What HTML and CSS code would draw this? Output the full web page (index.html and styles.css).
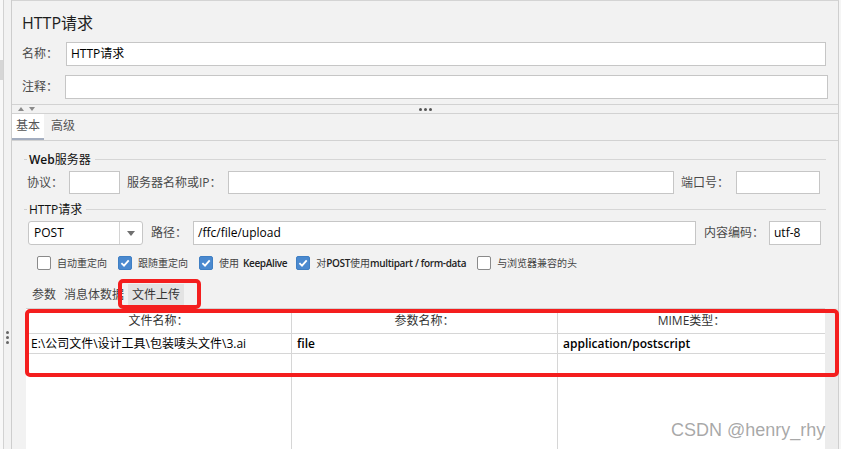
FILE: index.html
```html
<!DOCTYPE html>
<html lang="zh-CN">
<head>
<meta charset="utf-8">
<title>HTTP请求</title>
<link rel="stylesheet" href="styles.css">
</head>
<body>
<div class="app">
  <aside class="lstrip">
    <div class="edge"><div class="edge-mark"></div></div>
    <div class="grip"><i></i><i></i><i></i></div>
  </aside>
  <main class="main">
    <div class="title">HTTP请求</div>
    <div class="field name-row"><span class="lbl">名称：</span><div class="input">HTTP请求</div></div>
    <div class="field comment-row"><span class="lbl">注释：</span><div class="input"></div></div>
    <div class="splitter">
      <div class="arrows"><i class="up"></i><i class="down"></i></div>
      <div class="dots"><i></i><i></i><i></i></div>
      <div></div>
    </div>
    <div class="tabs"><div class="tab active">基本</div><div class="tab">高级</div></div>
    <section class="panel">
      <div class="group-title"><span class="dash"></span><span class="gt-text"><b>Web</b>服务器</span><span class="rule"></span></div>
      <div class="row row-server">
        <span class="lbl">协议：</span><div class="input w-proto"></div>
        <span class="lbl l-host">服务器名称或IP：</span><div class="input grow i-host"></div>
        <span class="lbl l-port">端口号：</span><div class="input w-port"></div>
      </div>
      <div class="group-title g2"><span class="dash"></span><span class="gt-text">HTTP请求</span><span class="rule"></span></div>
      <div class="row row-http">
        <div class="select"><span class="sel-val">POST</span><span class="sel-btn"><i></i></span></div>
        <span class="lbl l-path">路径：</span><div class="input grow i-path">/ffc/file/upload</div>
        <span class="lbl l-enc">内容编码：</span><div class="input w-enc">utf-8</div>
      </div>
      <div class="checks">
        <div class="cb"><span class="box"></span>自动重定向</div>
        <div class="cb"><span class="box on"><svg width="10" height="10" viewBox="0 0 10 10"><path d="M1.4 5.2 L4 7.7 L8.7 2.3" fill="none" stroke="#fff" stroke-width="1.8"/></svg></span>跟随重定向</div>
        <div class="cb"><span class="box on"><svg width="10" height="10" viewBox="0 0 10 10"><path d="M1.4 5.2 L4 7.7 L8.7 2.3" fill="none" stroke="#fff" stroke-width="1.8"/></svg></span>使用<b class="sp">KeepAlive</b></div>
        <div class="cb"><span class="box on"><svg width="10" height="10" viewBox="0 0 10 10"><path d="M1.4 5.2 L4 7.7 L8.7 2.3" fill="none" stroke="#fff" stroke-width="1.8"/></svg></span>对<b>POST</b>使用<b>multipart / form-data</b></div>
        <div class="cb"><span class="box"></span>与浏览器兼容的头</div>
      </div>
      <div class="subtabs">
        <div class="stab">参数</div>
        <div class="stab">消息体数据</div>
        <div class="stab active">文件上传</div>
      </div>
      <div class="tablewrap">
        <div class="grid">
          <div class="cell head">文件名称：</div>
          <div class="cell head">参数名称：</div>
          <div class="cell head last">MIME类型：</div>
          <div class="cell data">E:\公司文件\设计工具\包装唛头文件\3.ai</div>
          <div class="cell data"><b>file</b></div>
          <div class="cell data last"><b>application/postscript</b></div>
          <div class="cell data"></div>
          <div class="cell data"></div>
          <div class="cell data last"></div>
          <div class="cell fill"></div>
          <div class="cell fill"></div>
          <div class="cell fill last"></div>
        </div>
        <div class="track"></div>
      </div>
    </section>
  </main>
  <div class="rstrip"></div>
  <div class="mark mark-tab"></div>
  <div class="mark mark-table"></div>
  <div class="watermark">CSDN @henry_rhy</div>
</div>
</body>
</html>
```
FILE: styles.css
```css
* { box-sizing: border-box; margin: 0; padding: 0; }
html, body { width: 841px; height: 449px; overflow: hidden; }
body {
  background: #f2f2f2;
  font-family: "Open Sans", "Noto Sans CJK SC", sans-serif;
  font-size: 12px;
  color: #222;
}
b { font-weight: 600; }

.app { position: relative; display: flex; width: 841px; height: 449px; }

/* left strip */
.lstrip { flex: none; width: 12px; display: flex; border-right: 1px solid #cdcdcd; }
.edge { width: 4px; background: #f8f8f8; border-right: 1px solid #d2d2d2; }
.edge-mark { margin-top: 60px; height: 20px; background: #d6d6d6; }
.grip { flex: 1; display: flex; flex-direction: column; align-items: center; padding-top: 331px; }
.grip i { width: 3px; height: 3px; border-radius: 50%; background: #666; margin-bottom: 2px; }

/* main */
.main {
  flex: none; width: 827px; height: 449px;
  display: flex; flex-direction: column;
  border-top: 1px solid #d4d4d4; border-right: 1px solid #cfcfcf;
  overflow: hidden;
}
.rstrip { flex: none; width: 2px; background: #f5f5f5; }

.title { margin: 12px 0 0 10px; font-size: 16px; line-height: 20px; color: #1e1e1e; }

.field { display: flex; align-items: center; height: 24px; margin: 9px 12px 0 10px; }
.comment-row { margin-right: 10px; }
.field .input { flex: 1; margin-left: 8px; }
.comment-row .input { margin-left: 7px; }

.lbl { color: #4a4a4a; white-space: nowrap; line-height: 16px; font-size: 12px; }
.input {
  height: 24px; background: #fff; border: 1px solid #c6c6c6;
  padding: 0 4px; line-height: 22px; font-size: 12px; color: #000; white-space: nowrap;
}

/* splitter */
.splitter {
  margin-top: 5px; height: 10px;
  border-top: 1px solid #d2d2d2; border-bottom: 1px solid #d2d2d2;
  display: grid; grid-template-columns: 1fr auto 1fr; align-items: center;
}
.arrows { display: flex; align-items: center; gap: 5px; padding-left: 6px; }
.arrows .up { width: 0; height: 0; border-left: 3px solid transparent; border-right: 3px solid transparent; border-bottom: 4px solid #8a8a8a; }
.arrows .down { width: 0; height: 0; border-left: 3px solid transparent; border-right: 3px solid transparent; border-top: 4px solid #8a8a8a; }
.dots { display: flex; gap: 2px; }
.dots i { width: 3px; height: 3px; border-radius: 50%; background: #555; }

/* tabs */
.tabs { display: flex; height: 27px; border-bottom: 1px solid #d2d2d2; }
.tab { padding: 0 4px; line-height: 24px; color: #555; border-bottom: 2px solid transparent; }
.tab + .tab { margin-left: 3px; }
.tab.active { background: #fff; border-bottom-color: #a3adbf; }

/* panel */
.panel { flex: 1; min-height: 0; display: flex; flex-direction: column; }
.group-title { display: flex; align-items: center; height: 17px; margin: 10px 12px 0 12px; }
.group-title.g2 { margin-top: 7px; }
.dash { width: 3px; height: 1px; background: #cfcfcf; }
.gt-text { margin: 0 4px 0 2px; font-size: 12px; line-height: 17px; color: #111; white-space: nowrap; }
.rule { flex: 1; height: 1px; background: #d6d6d6; }

.row { display: flex; align-items: center; margin-top: 3px; }
.row .input { flex: none; }
.row .grow { flex: 1; }
.row-server { height: 23px; margin-left: 15px; margin-right: 18px; }
.row-server .input { height: 23px; line-height: 21px; }
.w-proto { width: 51px; margin-left: 6px; }
.l-host { margin-left: 7px; }
.i-host { margin-left: 6px; }
.l-port { margin-left: 7px; }
.w-port { width: 84px; margin-left: 7px; }

.row-http { height: 24px; margin-left: 16px; margin-right: 17px; }
.select {
  display: flex; width: 115px; height: 24px; background: #fff;
  border: 1px solid #c6c6c6; border-radius: 3px;
}
.sel-val { flex: 1; padding-left: 5px; line-height: 22px; color: #000; }
.sel-btn { width: 23px; border-left: 1px solid #d4d4d4; display: flex; align-items: center; justify-content: center; }
.sel-btn i { width: 0; height: 0; border-left: 4px solid transparent; border-right: 4px solid transparent; border-top: 5px solid #707070; }
.l-path { margin-left: 8px; }
.i-path { margin-left: 6px; }
.l-enc { margin-left: 8px; }
.w-enc { width: 52px; margin-left: 5px; }

/* checkboxes */
.checks { display: flex; align-items: center; height: 18px; margin: 9px 0 0 25px; }
.cb { display: flex; align-items: center; font-size: 10px; color: #444; line-height: 14px; margin-right: 11px; white-space: nowrap; }
.cb b { color: #222; letter-spacing: -0.35px; }
.cb b.sp { margin-left: 4px; }
.cb:nth-child(3) { margin-right: 9px; }
.box {
  width: 14px; height: 14px; border: 1px solid #8a8a8a; border-radius: 2px;
  background: #fff; margin-right: 6px; display: flex; align-items: center; justify-content: center;
}
.box.on { background: #4a89cf; border-color: #3f7fc4; }

/* sub tabs */
.subtabs { display: flex; height: 24px; margin: 12px 0 0 16px; }
.stab { padding: 0 4px; font-size: 12px; line-height: 21px; color: #444; border-bottom: 3px solid transparent; }
.stab.active { background: #e3e3e3; border-bottom-color: #a7afbd; color: #333; }

/* table */
.tablewrap { flex: 1; min-height: 0; display: flex; padding-left: 14px; }
.grid {
  width: 799px; background: #fff; border-top: 1px solid #d2d2d2;
  display: grid; grid-template-columns: 266px 266px 1fr; grid-template-rows: 25px 20px 20px 1fr;
}
.cell { border-right: 1px solid #d6d6d6; border-bottom: 1px solid #d6d6d6; white-space: nowrap; overflow: hidden; }
.cell.last { border-right: none; }
.cell.head { text-align: center; line-height: 24px; color: #333; }
.cell.data { padding-left: 5px; line-height: 19px; color: #000; }
.cell.fill { border-bottom: none; }
.track { flex: 1; background: #ececec; }

/* annotations */
.mark { position: absolute; border: 4px solid #f41e1e; border-radius: 5px; }
.mark-tab { left: 118px; top: 279px; width: 83px; height: 30px; }
.mark-table { left: 25px; top: 309px; width: 814px; height: 68px; }

.watermark {
  position: absolute; left: 671px; top: 421px;
  font-family: "Liberation Sans", Arial, sans-serif; font-size: 18px; line-height: 18px;
  color: rgba(140, 140, 140, 0.75); white-space: nowrap;
}
```
